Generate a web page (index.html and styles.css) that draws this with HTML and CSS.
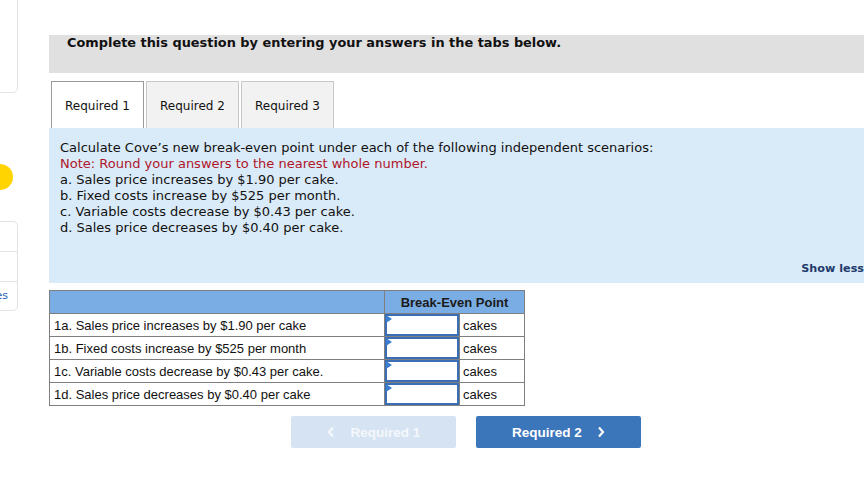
FILE: index.html
```html
<!DOCTYPE html>
<html>
<head>
<meta charset="utf-8">
<link rel="stylesheet" href="styles.css">
</head>
<body>
<div class="page">
  <aside class="sidebar">
    <div class="side-box side-top"></div>
    <div class="side-dot"></div>
    <div class="side-box side-list">
      <div class="side-item"></div>
      <div class="side-item"></div>
      <div class="side-item side-link">References</div>
    </div>
  </aside>
  <main class="main">
    <div class="instr-bar">Complete this question by entering your answers in the tabs below.</div>
    <div class="tabs">
      <div class="tab tab-active">Required 1</div>
      <div class="tab">Required 2</div>
      <div class="tab">Required 3</div>
    </div>
    <div class="panel">
      <p class="line">Calculate Cove’s new break-even point under each of the following independent scenarios:</p>
      <p class="line note">Note: Round your answers to the nearest whole number.</p>
      <p class="line">a. Sales price increases by $1.90 per cake.</p>
      <p class="line">b. Fixed costs increase by $525 per month.</p>
      <p class="line">c. Variable costs decrease by $0.43 per cake.</p>
      <p class="line">d. Sales price decreases by $0.40 per cake.</p>
      <div class="show-less">Show less</div>
    </div>
    <table class="grid">
      <thead>
        <tr><th class="blank"></th><th colspan="2">Break-Even Point</th></tr>
      </thead>
      <tbody>
        <tr><td class="label">1a. Sales price increases by $1.90 per cake</td><td class="inp"><span class="field"></span></td><td class="unit">cakes</td></tr>
        <tr><td class="label">1b. Fixed costs increase by $525 per month</td><td class="inp"><span class="field"></span></td><td class="unit">cakes</td></tr>
        <tr><td class="label">1c. Variable costs decrease by $0.43 per cake.</td><td class="inp"><span class="field"></span></td><td class="unit">cakes</td></tr>
        <tr><td class="label">1d. Sales price decreases by $0.40 per cake</td><td class="inp"><span class="field"></span></td><td class="unit">cakes</td></tr>
      </tbody>
    </table>
    <div class="nav">
      <div class="btn btn-prev"><svg class="chev chev-l" width="8" height="12" viewBox="0 0 8 12"><polyline points="6,1.5 2,6 6,10.5" fill="none" stroke="currentColor" stroke-width="2.2"/></svg>Required 1</div>
      <div class="btn btn-next">Required 2<svg class="chev chev-r" width="8" height="12" viewBox="0 0 8 12"><polyline points="2,1.5 6,6 2,10.5" fill="none" stroke="currentColor" stroke-width="2.2"/></svg></div>
    </div>
  </main>
</div>
</body>
</html>
```

FILE: styles.css
```css
* { box-sizing: border-box; }
html, body { margin: 0; padding: 0; background: #fff; overflow: hidden; }
body { font-family: "DejaVu Sans", Verdana, sans-serif; color: #111; }
.page { display: flex; width: 864px; height: 485px; }

.sidebar { margin-left: -60px; flex: 0 0 78px; display: flex; flex-direction: column; }
.side-box { border: 1px solid #e3e3e3; border-radius: 5px; background: #fff; }
.side-top { height: 98px; margin-top: -5px; }
.side-dot { width: 26px; height: 26px; border-radius: 50%; background: #ffd400; margin: 71px 0 0 47px; }
.side-list { margin-top: 31px; height: 90px; display: flex; flex-direction: column; }
.side-item { height: 30px; border-bottom: 1px solid #e3e3e3; }
.side-item:last-child { border-bottom: none; height: 28px; }
.side-link { font-size: 11px; color: #2a5db0; text-align: right; padding: 7px 9px 0 0; }

.main { margin-left: 31px; flex: 1; min-width: 0; padding-top: 35px; }
.instr-bar { height: 38px; background: #e0e0e0; font-weight: bold; font-size: 12.9px; padding: 0 0 0 18px; width: 840px; }

.tabs { display: flex; gap: 2px; margin: 8px 0 0 2px; height: 47px; }
.tab { width: 93px; height: 47px; border: 1px solid #c8c8c8; border-bottom: none; background: #f2f2f2; font-size: 12px; display: flex; align-items: center; justify-content: center; padding-top: 2px; }
.tab-active { background: #fff; border-color: #9a9a9a; }

.panel { background: #d9eaf8; height: 155px; width: 830px; padding: 12px 0 0 11px; position: relative; }
.line { margin: 0; font-size: 13px; line-height: 16px; white-space: nowrap; }
.note { color: #b0162b; }
.show-less { position: absolute; right: 15px; bottom: 8px; font-weight: bold; font-size: 11.2px; color: #1e3a6a; }

.grid { border-collapse: collapse; margin-top: 7px; font-family: "Liberation Sans", Arial, sans-serif; font-size: 13px; }
.grid th, .grid td { border: 1px solid #7f7f7f; padding: 0; height: 23px; }
.grid thead th { background: #7aade3; font-weight: bold; color: #1a1a1a; }
.grid th.blank { width: 335px; }
.grid td.label { padding-left: 4px; }
.grid td.inp { width: 75px; padding: 0; }
.field { display: block; height: 22px; border: 2px solid #3b6fb5; position: relative; }
.field::before { content: ""; position: absolute; left: -1px; top: -1px; border-top: 4px solid transparent; border-bottom: 4px solid transparent; border-left: 6px solid #3b7ed0; }
.grid td.unit { width: 65px; padding-left: 3px; }

.nav { display: flex; gap: 20px; margin: 10px 0 0 242px; }
.btn { width: 165px; height: 32px; border-radius: 2px; display: flex; align-items: center; justify-content: center; font-family: "Liberation Sans", Arial, sans-serif; font-weight: bold; font-size: 13.5px; color: #fff; }
.btn-prev { background: #d6e3f2; color: #f4f8fc; }
.btn-next { background: #3a76b9; }
.chev { display: block; }
.chev-l { margin-right: 16px; }
.chev-r { margin-left: 15px; }
```
